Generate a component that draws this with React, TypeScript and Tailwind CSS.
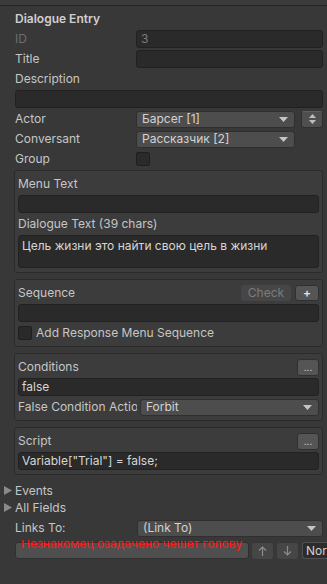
import React from "react";

const field = "h-[18px] rounded-[3px] border border-[#212121] bg-[#2a2a2a]";
const dropdown =
  "h-[17px] rounded-[3px] border border-[#2f2f2f] bg-[#4d4d4d] flex items-center pl-[5px] pr-[6px] text-[#d2d2d2]";

function Caret() {
  return (
    <svg width="9" height="5" viewBox="0 0 9 5" className="ml-auto shrink-0">
      <path d="M0 0h9L4.5 5z" fill="#c4c4c4" />
    </svg>
  );
}

function Foldout({ label }: { label: string }) {
  return (
    <div className="flex h-[17px] items-center">
      <svg width="9" height="9" viewBox="0 0 9 9" className="ml-[4px] mr-[2px]">
        <path d="M0 0l8 4.5L0 9z" fill="#8a8a8a" />
      </svg>
      <span>{label}</span>
    </div>
  );
}

function Box({ children }: { children: React.ReactNode }) {
  return (
    <div className="ml-[-1px] flex flex-col gap-[2px] rounded-[3px] border border-[#2b2b2b] bg-[#3c3c3c] px-[3px] pb-[4px] pt-[4px]">
      {children}
    </div>
  );
}

function DotsButton() {
  return (
    <div className="ml-auto flex h-[17px] w-[22px] items-center justify-center rounded-[3px] border border-[#303030] bg-[#555555] text-[10px] leading-none text-[#dcdcdc]">
      ...
    </div>
  );
}

export default function App() {
  return (
    <div className="h-[584px] w-[327px] overflow-hidden bg-[#383838] font-['Inter',sans-serif] text-[12px] leading-[18px] text-[#c6c6c6]">
      <div className="h-[6px] border-b border-[#232323] bg-[#3b3b3b]" />

      <div className="flex flex-col gap-[2px] pl-[15px] pr-[4px] pt-[4px]">
        <div className="h-[18px] font-semibold text-[#d0d0d0]">Dialogue Entry</div>

        <div className="flex h-[18px] items-center">
          <span className="w-[121px] text-[#6e6e6e]">ID</span>
          <div className={`${field} flex-1 px-[4px] leading-[16px] text-[#7c7c7c]`}>3</div>
        </div>

        <div className="flex h-[18px] items-center">
          <span className="w-[121px]">Title</span>
          <div className={`${field} flex-1`} />
        </div>

        <div className="h-[18px]">Description</div>
        <div className={field} />

        <div className="flex h-[18px] items-center">
          <span className="w-[121px]">Actor</span>
          <div className={`${dropdown} w-[159px]`}>
            <span>Барсег [1]</span>
            <Caret />
          </div>
          <div className="ml-auto flex h-[17px] w-[22px] items-center justify-center rounded-[3px] border border-[#2f2f2f] border-t-[#5e5e5e] bg-[#4f4f4f]">
            <svg width="7" height="10" viewBox="0 0 7 10">
              <path d="M0 4h7L3.5 0zM0 6h7L3.5 10z" fill="#bdbdbd" />
            </svg>
          </div>
        </div>

        <div className="flex h-[18px] items-center">
          <span className="w-[121px]">Conversant</span>
          <div className={`${dropdown} w-[159px]`}>
            <span>Рассказчик [2]</span>
            <Caret />
          </div>
        </div>

        <div className="flex h-[18px] items-center">
          <span className="w-[121px]">Group</span>
          <div className="h-[14px] w-[14px] rounded-[2px] border border-[#1f1f1f] bg-[#2a2a2a]" />
        </div>

        <div>
          <Box>
            <div className="h-[18px]">Menu Text</div>
            <div className={field} />
            <div className="h-[18px]">Dialogue Text (39 chars)</div>
            <div className="h-[33px] rounded-[3px] border border-[#212121] bg-[#2a2a2a] px-[3px] pt-[1px] text-[#d6d6d6]">
              Цель жизни это найти свою цель в жизни
            </div>
          </Box>
        </div>

        <div className="mt-[4px]">
          <Box>
            <div className="flex h-[18px] items-center">
              <span>Sequence</span>
              <div className="ml-auto flex h-[16px] w-[50px] items-center justify-center rounded-[3px] bg-[#464646] text-[#7d7d7d]">
                Check
              </div>
              <div className="ml-[4px] flex h-[16px] w-[24px] items-center justify-center rounded-[3px] border border-[#303030] bg-[#555555] text-[12px] font-semibold text-[#e2e2e2]">
                +
              </div>
            </div>
            <div className={field} />
            <div className="flex h-[18px] items-center">
              <div className="h-[14px] w-[14px] rounded-[2px] border border-[#1f1f1f] bg-[#2a2a2a]" />
              <span className="ml-[4px]">Add Response Menu Sequence</span>
            </div>
          </Box>
        </div>

        <div className="mt-[4px]">
          <Box>
            <div className="flex h-[18px] items-center">
              <span>Conditions</span>
              <DotsButton />
            </div>
            <div className={`${field} px-[3px] leading-[16px] text-[#d6d6d6]`}>false</div>
            <div className="flex h-[18px] items-center">
              <div className="w-[122px] shrink-0">
                <div className="w-[119px] overflow-hidden whitespace-nowrap">False Condition Action</div>
              </div>
              <div className={`${dropdown} flex-1`}>
                <span>Forbit</span>
                <Caret />
              </div>
            </div>
          </Box>
        </div>

        <div className="mt-[4px]">
          <Box>
            <div className="flex h-[18px] items-center">
              <span>Script</span>
              <DotsButton />
            </div>
            <div className={`${field} px-[3px] leading-[16px] text-[#d6d6d6]`}>Variable["Trial"] = false;</div>
          </Box>
        </div>
      </div>

      <div className="mt-[7px] flex flex-col">
        <Foldout label="Events" />
        <Foldout label="All Fields" />
      </div>

      <div className="mt-[3px] flex h-[18px] items-center pl-[15px] pr-[4px]">
        <span className="w-[122px]">Links To:</span>
        <div className={`${dropdown} flex-1`}>
          <span>(Link To)</span>
          <Caret />
        </div>
      </div>

      <div className="mt-[5px] flex h-[17px] items-center pl-[15px]">
        <div className="relative h-[17px] w-[234px] rounded-[3px] border border-[#303030] bg-[#4f4f4f]">
          <div className="absolute left-0 right-0 top-[-3px] h-[12px] overflow-hidden">
            <div className="mt-[-5px] whitespace-nowrap pl-[5px] text-[#ff1a1a]">Незнакомец озадачено чешет голову</div>
          </div>
        </div>
        <div className="ml-[3px] flex h-[16px] w-[21px] items-center justify-center rounded-[3px] bg-[#464646]">
          <svg width="9" height="10" viewBox="0 0 9 10">
            <path d="M4.5 10V1M1 4.5L4.5 1 8 4.5" stroke="#8c8c8c" strokeWidth="1.2" fill="none" />
          </svg>
        </div>
        <div className="ml-[4px] flex h-[16px] w-[21px] items-center justify-center rounded-[3px] bg-[#464646]">
          <svg width="9" height="10" viewBox="0 0 9 10">
            <path d="M4.5 0v9M1 5.5L4.5 9 8 5.5" stroke="#8c8c8c" strokeWidth="1.2" fill="none" />
          </svg>
        </div>
        <div className="ml-[4px] flex h-[17px] flex-1 items-center overflow-hidden whitespace-nowrap rounded-l-[3px] border border-r-0 border-[#505050] bg-[#2c2c2c] pl-[3px] text-[#d0d0d0]">
          Normal
        </div>
      </div>
    </div>
  );
}
